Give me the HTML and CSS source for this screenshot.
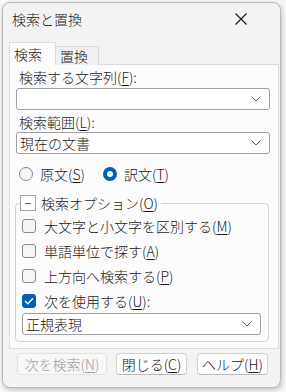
FILE: index.html
```html
<!DOCTYPE html>
<html lang="ja">
<head>
<meta charset="utf-8">
<link rel="stylesheet" href="styles.css">
</head>
<body>
<div class="window">
  <div class="titlebar">
    <span class="title">検索と置換</span>
    <svg class="close" width="12" height="12" viewBox="0 0 12 12"><path d="M0.5 0.5 L11.5 11.5 M11.5 0.5 L0.5 11.5" stroke="#1a1a1a" stroke-width="1.2" fill="none"/></svg>
  </div>
  <div class="tabs">
    <div class="tab active">検索</div>
    <div class="tab">置換</div>
  </div>
  <div class="pane">
    <div class="label">検索する文字列(<u>F</u>):</div>
    <div class="combo combo-a">
      <span class="combo-text"></span>
      <svg class="chev" width="10" height="6" viewBox="0 0 10 6"><path d="M0.5 0.5 L5 5 L9.5 0.5" stroke="#5a5a5a" stroke-width="1" fill="none"/></svg>
    </div>
    <div class="label label-b">検索範囲(<u>L</u>):</div>
    <div class="combo combo-b">
      <span class="combo-text">現在の文書</span>
      <svg class="chev" width="10" height="6" viewBox="0 0 10 6"><path d="M0.5 0.5 L5 5 L9.5 0.5" stroke="#5a5a5a" stroke-width="1" fill="none"/></svg>
    </div>
    <div class="radios">
      <label class="radio"><span class="rb"></span>原文(<u>S</u>)</label>
      <label class="radio on"><span class="rb"></span>訳文(<u>T</u>)</label>
    </div>
    <fieldset class="group">
      <legend class="legend"><span class="collapse">−</span>検索オプション(<u>O</u>)</legend>
      <div class="check"><span class="cb"></span>大文字と小文字を区別する(<u>M</u>)</div>
      <div class="check"><span class="cb"></span>単語単位で探す(<u>A</u>)</div>
      <div class="check"><span class="cb"></span>上方向へ検索する(<u>P</u>)</div>
      <div class="check"><span class="cb on"><svg width="10" height="8" viewBox="0 0 10 8"><path d="M1 4 L3.8 6.8 L9 1.2" stroke="#fff" stroke-width="1.3" fill="none"/></svg></span>次を使用する(<u>U</u>):</div>
      <div class="combo combo-c">
        <span class="combo-text">正規表現</span>
        <svg class="chev" width="10" height="6" viewBox="0 0 10 6"><path d="M0.5 0.5 L5 5 L9.5 0.5" stroke="#5a5a5a" stroke-width="1" fill="none"/></svg>
      </div>
    </fieldset>
  </div>
  <div class="buttons">
    <div class="btn btn-wide disabled">次を検索(<u>N</u>)</div>
    <div class="btn">閉じる(<u>C</u>)</div>
    <div class="btn">ヘルプ(<u>H</u>)</div>
  </div>
</div>
</body>
</html>
```
FILE: styles.css
```css
* { box-sizing: border-box; }
html, body { margin: 0; padding: 0; }
body {
  background: #f7f7f7;
  font-family: "Noto Sans CJK JP", "Noto Sans", sans-serif;
  font-size: 14px;
  font-weight: 300;
  color: #1b1b1b;
  width: 286px;
  height: 392px;
  overflow: hidden;
}
u { text-decoration-thickness: 1px; text-underline-offset: 2px; }

.window {
  margin: 2px 0 0 2px;
  width: 279px;
  height: 386px;
  border: 1px solid #b9b9b9;
  border-radius: 8px;
  background: #f3f3f3;
  box-shadow: 1px 2px 5px rgba(0,0,0,0.22);
  display: flex;
  flex-direction: column;
}

.titlebar {
  height: 39px;
  display: flex;
  align-items: flex-start;
  padding: 6px 0 0 9px;
}
.title { line-height: 20px; font-size: 14px; }
.close { margin: 4px 33px 0 auto; }

.tabs {
  display: flex;
  align-items: flex-end;
  margin-left: 6px;
  height: 23px;
  margin-bottom: -1px;
  position: relative;
  z-index: 1;
}
.tab {
  width: 44px;
  height: 19px;
  border: 1px solid #dcdcdc;
  border-bottom: none;
  background: #f0f0f0;
  line-height: 18px;
  padding-left: 4px;
}
.tab.active {
  width: 47px;
  height: 23px;
  background: #fbfbfb;
  line-height: 22px;
  padding-left: 4px;
  margin-right: -1px;
}

.pane {
  margin-left: 6px;
  width: 270px;
  background: #fbfbfb;
  border: 1px solid #dcdcdc;
  padding: 3px 0 3px 0;
  display: flex;
  flex-direction: column;
}

.label { line-height: 18px; padding-left: 9px; }
.label-b { margin-top: 3px; }

.combo {
  height: 22px;
  margin: 2px 0 0 6px;
  width: 254px;
  border: 1px solid #a0a0a0;
  border-radius: 3px;
  background: #fff;
  display: flex;
  align-items: center;
  padding: 0 8px 0 3px;
}
.combo-b { margin-top: 1px; }
.combo-text { flex: 1; line-height: 20px; }
.chev { flex: none; }

.radios {
  display: flex;
  height: 20px;
  margin-top: 10px;
  padding-left: 9px;
}
.radio { display: flex; align-items: center; line-height: 20px; }
.radio + .radio { margin-left: 18px; }
.rb {
  width: 14px; height: 14px;
  border: 1px solid #8a8a8a;
  border-radius: 50%;
  background: #f6f6f6;
  margin-right: 7px;
}
.radio.on .rb {
  border: 4px solid #005fb8;
  background: #fff;
}

.group {
  margin: 9px 0 3px 5px;
  width: 254px;
  border: 1px solid #cfd6e0;
  border-radius: 4px;
  padding: 0 0 6px 0;
  min-width: 0;
}
.legend {
  margin-left: 4px;
  padding: 0 3px 0 0;
  display: flex;
  align-items: center;
  height: 20px;
  line-height: 20px;
}
.collapse {
  width: 16px; height: 16px;
  border: 1px solid #a8a8a8;
  background: #fff;
  display: flex;
  align-items: center;
  justify-content: center;
  line-height: 14px;
  font-size: 13px;
  margin-right: 5px;
}

.check {
  display: flex;
  align-items: center;
  height: 25px;
  padding-left: 6px;
  line-height: 20px;
}
.cb {
  width: 14px; height: 14px;
  border: 1px solid #8a8a8a;
  border-radius: 3px;
  background: #f6f6f6;
  margin-right: 8px;
  display: flex;
  align-items: center;
  justify-content: center;
}
.cb.on { background: #005fb8; border-color: #005fb8; }

.combo-c { width: 239px; margin: 0 0 0 6px; }

.buttons {
  display: flex;
  margin: 4px 0 0 14px;
  gap: 9px;
}
.btn {
  width: 71px;
  height: 22px;
  border: 1px solid #d0d0d0;
  border-bottom-color: #bcbcbc;
  border-radius: 4px;
  background: #fdfdfd;
  line-height: 20px;
  text-align: center;
}
.btn + .btn + .btn { margin-left: 1px; }
.btn-wide { width: 90px; }
.btn.disabled {
  color: #a0a0a0;
  background: #f8f8f8;
  border-color: #e3e3e3;
}
```
